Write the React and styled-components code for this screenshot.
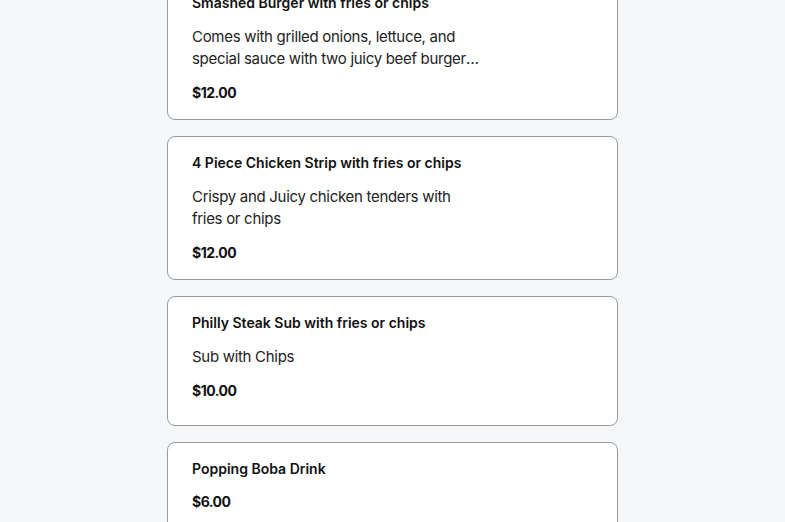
import React from 'react';
import styled, { createGlobalStyle } from 'styled-components';

const GlobalStyle = createGlobalStyle`
    html, body {
        margin: 0;
        padding: 0;
        background: #f5f6f7;
        overflow: hidden;
    }
    * {
        box-sizing: border-box;
    }
`;

const items = [
    {
        name: 'Smashed Burger with fries or chips',
        desc: 'Comes with grilled onions, lettuce, and special sauce with two juicy beef burger patties, cheese and pickles',
        price: '$12.00',
    },
    {
        name: '4 Piece Chicken Strip with fries or chips',
        desc: 'Crispy and Juicy chicken tenders with fries or chips',
        price: '$12.00',
    },
    {
        name: 'Philly Steak Sub with fries or chips',
        desc: 'Sub with Chips',
        price: '$10.00',
    },
    {
        name: 'Popping Boba Drink',
        price: '$6.00',
    },
];

function App() {
    return (
        <>
            <GlobalStyle />
            <Page>
                <MenuList>
                    {items.map(item => (
                        <Card key={item.name}>
                            <Title>{item.name}</Title>
                            {item.desc && <Desc>{item.desc}</Desc>}
                            <Price>{item.price}</Price>
                        </Card>
                    ))}
                </MenuList>
            </Page>
        </>
    );
}

export default App;

const Page = styled.div`
    width: 100%;
    min-height: 522px;
    display: flex;
    justify-content: center;
    font-family: Inter, 'Liberation Sans', sans-serif;
    color: #111;
`;

// 스크롤된 상태처럼 첫 카드 윗부분이 잘리도록
const MenuList = styled.div`
    width: 451px;
    margin-top: -24px;
    display: flex;
    flex-direction: column;
    gap: 16px;
`;

const Card = styled.div`
    min-height: 130px;
    padding: 16px 24px;
    background: #fff;
    border: 1px solid #9a9a9a;
    border-radius: 8px;
    display: flex;
    flex-direction: column;
    gap: 13px;
`;

const Title = styled.p`
    margin: 0;
    font-size: 14px;
    line-height: 20px;
    font-weight: 600;
`;

const Desc = styled.p`
    margin: 0;
    max-width: 292px;
    font-size: 15px;
    line-height: 22px;
    font-weight: 400;
    letter-spacing: -0.3px;
    color: #222;
    display: -webkit-box;
    -webkit-line-clamp: 2;
    -webkit-box-orient: vertical;
    overflow: hidden;
`;

const Price = styled.p`
    margin: 0;
    font-size: 14px;
    line-height: 20px;
    font-weight: 700;
    letter-spacing: -0.5px;
`;
